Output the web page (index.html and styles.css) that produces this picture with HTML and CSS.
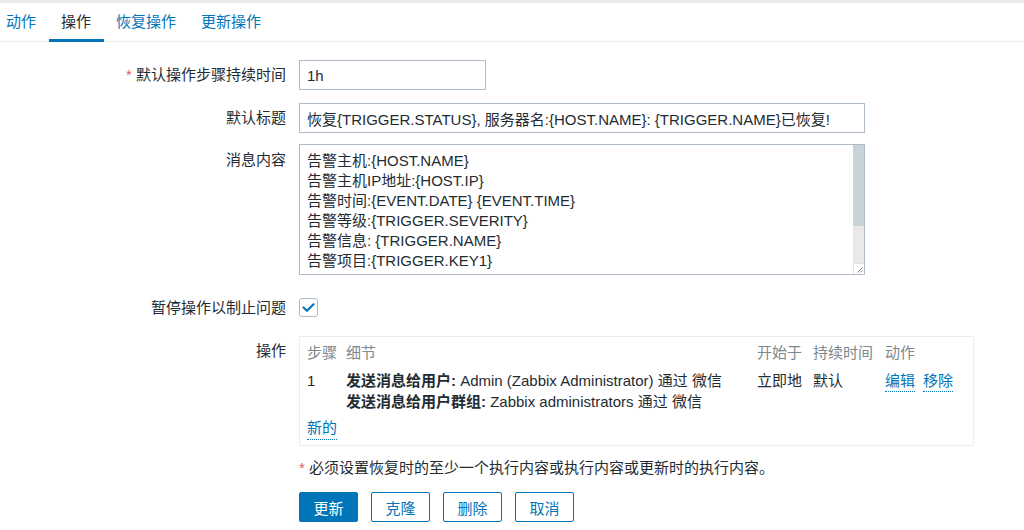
FILE: index.html
```html
<!DOCTYPE html>
<html lang="zh-CN">
<head>
    <meta charset="UTF-8">
    <meta name="viewport" content="width=device-width, initial-scale=1.0">
    <title>动作 - 操作</title>
    <link rel="stylesheet" href="styles.css">
</head>
<body>
    <div class="topbar"></div>

    <ul class="tabs">
        <li class="tab">动作</li>
        <li class="tab active">操作</li>
        <li class="tab">恢复操作</li>
        <li class="tab">更新操作</li>
    </ul>

    <form class="form">
        <div class="form-row row-duration">
            <label class="form-label"><span class="asterisk">*</span> 默认操作步骤持续时间</label>
            <input type="text" class="input input-short" value="1h">
        </div>

        <div class="form-row row-subject">
            <label class="form-label">默认标题</label>
            <input type="text" class="input input-wide" value="恢复{TRIGGER.STATUS}, 服务器名:{HOST.NAME}: {TRIGGER.NAME}已恢复!">
        </div>

        <div class="form-row row-message">
            <label class="form-label">消息内容</label>
            <div class="textarea-wrap">
                <textarea class="textarea">告警主机:{HOST.NAME}
告警主机IP地址:{HOST.IP}
告警时间:{EVENT.DATE} {EVENT.TIME}
告警等级:{TRIGGER.SEVERITY}
告警信息: {TRIGGER.NAME}
告警项目:{TRIGGER.KEY1}

问题详情:{ITEM.NAME}:{ITEM.VALUE}
当前状态:{TRIGGER.STATUS}:{ITEM.VALUE1}</textarea>
                <div class="scrollbar">
                    <div class="scroll-thumb"></div>
                    <div class="resizer">
                        <svg width="10" height="10" viewBox="0 0 10 10">
                            <path d="M8.5 3.5L3.5 8.5M8.5 6.5L6.5 8.5" stroke="#8a8a8a" stroke-width="1"/>
                        </svg>
                    </div>
                </div>
            </div>
        </div>

        <div class="form-row row-pause">
            <label class="form-label label-check">暂停操作以制止问题</label>
            <span class="checkbox">
                <svg width="19" height="19" viewBox="0 0 19 19">
                    <polyline points="4.5,9.5 8,12.8 14.5,6.3" fill="none" stroke="#0275b8" stroke-width="2.2" stroke-linecap="round" stroke-linejoin="round"/>
                </svg>
            </span>
        </div>

        <div class="form-row row-ops">
            <label class="form-label">操作</label>
            <div class="ops-box">
                <table class="ops-table">
                    <thead>
                        <tr>
                            <th class="col-step">步骤</th>
                            <th class="col-detail">细节</th>
                            <th class="col-start">开始于</th>
                            <th class="col-duration">持续时间</th>
                            <th class="col-action">动作</th>
                        </tr>
                    </thead>
                    <tbody>
                        <tr>
                            <td>1</td>
                            <td>
                                <b>发送消息给用户:</b> Admin (Zabbix Administrator) 通过 微信<br>
                                <b>发送消息给用户群组:</b> Zabbix administrators 通过 微信
                            </td>
                            <td>立即地</td>
                            <td>默认</td>
                            <td><a class="link" href="#">编辑</a><a class="link link-gap" href="#">移除</a></td>
                        </tr>
                    </tbody>
                </table>
                <a class="link link-new" href="#">新的</a>
            </div>
        </div>

        <div class="form-actions">
            <p class="footnote"><span class="asterisk">*</span> 必须设置恢复时的至少一个执行内容或执行内容或更新时的执行内容。</p>
            <div class="buttons">
                <button type="button" class="btn btn-primary">更新</button>
                <button type="button" class="btn">克隆</button>
                <button type="button" class="btn">删除</button>
                <button type="button" class="btn">取消</button>
            </div>
        </div>
    </form>
</body>
</html>
```

FILE: styles.css
```css
* {
    margin: 0;
    padding: 0;
    box-sizing: border-box;
}

body {
    font-family: "Liberation Sans", "Noto Sans CJK SC", Arial, sans-serif;
    font-size: 15px;
    color: #1f2c33;
    background-color: white;
}

.topbar {
    height: 3px;
    background-color: #e8ebed;
}

/* tabs */
.tabs {
    display: flex;
    list-style: none;
    border-bottom: 1px solid #ebeef0;
}

.tab {
    padding: 1px 12.5px 0;
    line-height: 35px;
    color: #0275b8;
    border-bottom: 3px solid transparent;
    margin-bottom: -1px;
}

.tab:first-child {
    padding-left: 6px;
}

.tab.active {
    color: #1f2c33;
    border-bottom-color: #0275b8;
}

/* form */
.form {
    padding-top: 18px;
}

.form-row {
    display: flex;
    align-items: flex-start;
    gap: 13px;
}

.form-label {
    width: 286px;
    flex-shrink: 0;
    text-align: right;
    line-height: 30px;
}

.asterisk {
    color: #e05a5a;
}

.row-duration {
    margin-bottom: 13px;
}

.row-subject {
    margin-bottom: 11px;
}

.row-message {
    margin-bottom: 23px;
}

.row-message .form-label {
    margin-top: 1px;
}

.row-pause {
    margin-bottom: 19px;
}

.label-check {
    line-height: 19px;
}

.input {
    height: 30px;
    padding: 0 7px;
    border: 1px solid #acbbc7;
    font: inherit;
    color: #1f2c33;
    background: white;
}

.input-short {
    width: 187px;
}

.input-wide {
    width: 566px;
}

.textarea-wrap {
    position: relative;
    width: 566px;
    height: 131px;
}

.textarea {
    display: block;
    width: 100%;
    height: 100%;
    padding: 6px 19px 5px 7px;
    border: 1px solid #acbbc7;
    font: inherit;
    line-height: 20px;
    color: #1f2c33;
    overflow: hidden;
    resize: none;
}

/* drawn scrollbar over the textarea's right edge */
.scrollbar {
    position: absolute;
    top: 1px;
    right: 1px;
    bottom: 1px;
    width: 11px;
    display: flex;
    flex-direction: column;
    background-color: #e9e9e9;
}

.scroll-thumb {
    height: 81px;
    background-color: #c8d2d9;
}

.resizer {
    margin-top: auto;
    height: 11px;
    background-color: white;
    border-top: 1px solid #e3e3e3;
    border-left: 1px solid #e3e3e3;
}

.resizer svg {
    display: block;
}

.checkbox {
    display: block;
    width: 19px;
    height: 19px;
    border: 1px solid #acbbc7;
    border-radius: 3px;
    position: relative;
}

.checkbox svg {
    position: absolute;
    left: -1px;
    top: -1px;
}

/* operations list */
.ops-box {
    width: 675px;
    height: 110px;
    border: 1px solid #ebeef0;
    padding: 6px 7px 0;
}

.ops-table {
    width: 100%;
    border-collapse: collapse;
}

.ops-table th {
    font-weight: normal;
    color: #7d888e;
    text-align: left;
    line-height: 20px;
    padding-bottom: 7px;
}

.ops-table td {
    vertical-align: top;
    line-height: 21px;
}

.col-step {
    width: 39px;
}

.col-detail {
    width: 411px;
}

.col-start {
    width: 56px;
}

.col-duration {
    width: 72px;
}

.link {
    color: #0275b8;
    text-decoration: none;
    border-bottom: 1px dotted #0275b8;
    padding-bottom: 2px;
}

.link-gap {
    margin-left: 8px;
}

.link-new {
    display: inline-block;
    margin-top: 6px;
    line-height: 20px;
    padding-bottom: 1px;
}

/* footer */
.form-actions {
    padding-left: 299px;
}

.footnote {
    margin-top: 12px;
    line-height: 20px;
}

.buttons {
    display: flex;
    gap: 13px;
    margin-top: 14px;
}

.btn {
    height: 30px;
    padding: 0 13.5px;
    font: inherit;
    color: #0275b8;
    background-color: white;
    border: 1px solid #0275b8;
    border-radius: 2px;
    cursor: pointer;
}

.btn-primary {
    color: white;
    background-color: #0275b8;
}
```
